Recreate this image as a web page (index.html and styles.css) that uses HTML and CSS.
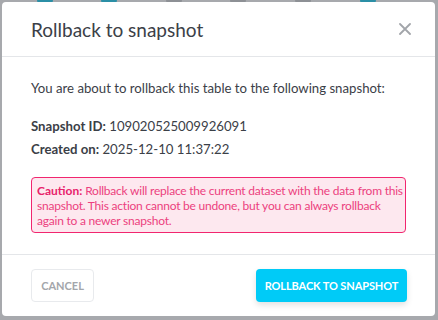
FILE: index.html
```html
<!DOCTYPE html>
<html>
<head>
<meta charset="utf-8">
<link rel="stylesheet" href="styles.css">
</head>
<body>
<div class="backdrop">
  <div class="bg-dots">
    <span class="dot teal"></span><span class="dot teal"></span><span class="dot grey"></span><span class="dot grey"></span><span class="dot grey"></span><span class="dot teal"></span>
  </div>
  <div class="modal">
    <div class="modal-header">
      <h1 class="title">Rollback to snapshot</h1>
      <button class="close" aria-label="Close">
        <svg width="12" height="12" viewBox="0 0 12 12"><path d="M1 1L11 11M11 1L1 11" stroke="#a2a5aa" stroke-width="1.8" stroke-linecap="round"/></svg>
      </button>
    </div>
    <div class="modal-body">
      <p class="intro">You are about to rollback this table to the following snapshot:</p>
      <div class="meta">
        <div class="meta-row"><b>Snapshot ID:</b> 109020525009926091</div>
        <div class="meta-row"><b>Created on:</b> 2025-12-10 11:37:22</div>
      </div>
      <div class="caution"><b>Caution:</b> Rollback will replace the current dataset with the data from this snapshot. This action cannot be undone, but you can always rollback again to a newer snapshot.</div>
    </div>
    <div class="modal-footer">
      <button class="btn btn-cancel">CANCEL</button>
      <button class="btn btn-primary">ROLLBACK TO SNAPSHOT</button>
    </div>
  </div>
</div>
</body>
</html>
```
FILE: styles.css
```css
html, body {
  margin: 0;
  padding: 0;
}
body {
  width: 438px;
  height: 320px;
  background: #a7a9ad;
  font-family: "Source Sans Pro", Lato, "Liberation Sans", sans-serif;
  overflow: hidden;
}
.backdrop {
  position: relative;
  padding: 2px 3px 4px 2px;
}
.bg-dots {
  position: absolute;
  top: -8px;
  left: 0;
  right: 0;
}
.dot {
  position: absolute;
  width: 16px;
  height: 16px;
  border-radius: 50%;
}
.dot.teal { background: #2b8fa6; }
.dot.grey { background: #8d9095; }
.dot:nth-child(1) { left: 37px; }
.dot:nth-child(2) { left: 101px; }
.dot:nth-child(3) { left: 166px; }
.dot:nth-child(4) { left: 230px; }
.dot:nth-child(5) { left: 295px; }
.dot:nth-child(6) { left: 360px; }
.modal {
  position: relative;
  background: #fff;
  border-radius: 4px;
  height: 314px;
  display: flex;
  flex-direction: column;
  color: #3b4047;
}
.modal-header {
  height: 54px;
  border-bottom: 1px solid #e4e6e9;
  display: flex;
  align-items: center;
  justify-content: space-between;
  padding: 0 23px 0 29px;
}
.title {
  margin: 0;
  font-size: 19px;
  font-weight: 400;
  color: #3b4047;
}
.close {
  border: 0;
  background: none;
  padding: 0;
  width: 14px;
  height: 14px;
  display: flex;
  align-items: center;
  justify-content: center;
}
.modal-body {
  padding: 20px 29px 0 29px;
  height: 177px;
  border-bottom: 1px solid #e4e6e9;
  font-size: 13.2px;
}
.intro {
  margin: 0;
  line-height: 22px;
  white-space: nowrap;
}
.meta {
  margin-top: 16px;
}
.meta-row {
  line-height: 23px;
}
.meta-row b {
  font-weight: 700;
}
.caution {
  margin-top: 16px;
  border: 1px solid #f1266f;
  background: #fde8ef;
  color: #ec3f7e;
  border-radius: 4px;
  padding: 5px 2px 4px 5px;
  font-size: 12px;
  line-height: 15px;
  letter-spacing: -0.22px;
}
.caution b {
  color: #e8226b;
  letter-spacing: 0;
}
.modal-footer {
  flex: 1;
  display: flex;
  align-items: center;
  justify-content: space-between;
  padding: 0 28px 0 29px;
}
.btn {
  font-family: inherit;
  height: 33px;
  padding: 0;
  border-radius: 4px;
  font-size: 11px;
  font-weight: 700;
  white-space: nowrap;
  cursor: pointer;
}
.btn-cancel {
  width: 63px;
  background: #fff;
  border: 1px solid #e8eaed;
  color: #a3a6ab;
}
.btn-primary {
  width: 151px;
  border: 0;
  background: #00cbf7;
  color: #fff;
  letter-spacing: -0.1px;
  box-shadow: 0 3px 6px rgba(0, 0, 0, 0.12);
}
```
